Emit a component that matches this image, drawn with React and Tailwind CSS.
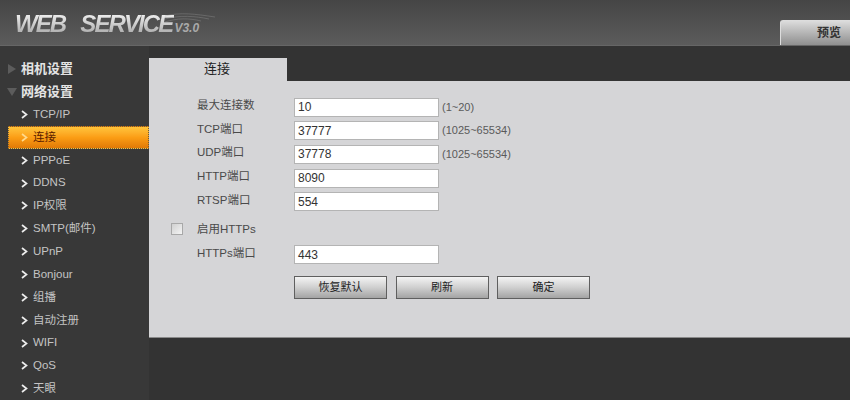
const font = { fontFamily: '"Liberation Sans", "Noto Sans CJK SC", sans-serif' }

const menuItems = ['TCP/IP', '连接', 'PPPoE', 'DDNS', 'IP权限', 'SMTP(邮件)', 'UPnP', 'Bonjour', '组播', '自动注册', 'WIFI', 'QoS', '天眼']

const portRows = [
    { label: '最大连接数', value: '10', hint: '(1~20)' },
    { label: 'TCP端口', value: '37777', hint: '(1025~65534)' },
    { label: 'UDP端口', value: '37778', hint: '(1025~65534)' },
    { label: 'HTTP端口', value: '8090' },
    { label: 'RTSP端口', value: '554' },
]

function Chevron() {
    return (
        <svg width="7" height="9" viewBox="0 0 7 9" className="shrink-0">
            <path d="M1 1 L5.5 4.5 L1 8" fill="none" stroke="currentColor" strokeWidth="1.7" />
        </svg>
    )
}

function Logo() {
    return (
        <div className="relative flex items-baseline italic font-bold text-[24px] leading-none tracking-[-1.9px]">
            <span className="bg-gradient-to-b from-[#f6f6f6] to-[#a6a6a6] bg-clip-text text-transparent pr-[2px]">WEB</span>
            <span className="ml-[13px] bg-gradient-to-b from-[#f6f6f6] to-[#a6a6a6] bg-clip-text text-transparent pr-[2px]">SERVICE</span>
            <span className="text-[12px] tracking-normal text-[#a9a9a9]">V3.0</span>
            {/* speed lines behind the version */}
            <svg width="50" height="14" viewBox="0 0 50 14" className="absolute left-[150px] top-0 opacity-50">
                <path d="M0 4 C15 0 30 2 50 5 M0 7 C15 3 30 4 44 7 M0 10 C12 6 24 6 36 9" fill="none" stroke="#9a9a9a" strokeWidth="0.7" />
            </svg>
        </div>
    )
}

function Sidebar() {
    return (
        <div className="w-[149px] shrink-0 bg-[#383838] pt-[11px] h-[354px] overflow-hidden">
            <div className="flex items-center h-[23px] pl-[8px] gap-[3px] text-[13px] font-bold text-[#e4e4e4]">
                <span className="w-0 h-0 border-y-[5px] border-y-transparent border-l-[8px] border-l-[#5c5c5c]" />
                <span className="ml-[2px]">相机设置</span>
            </div>
            <div className="flex items-center h-[23px] pl-[8px] gap-[3px] text-[13px] font-bold text-[#e4e4e4]">
                <span className="w-0 h-0 border-x-[5px] border-x-transparent border-t-[8px] border-t-[#5c5c5c] -ml-[1px]" />
                <span className="ml-[1px]">网络设置</span>
            </div>
            <div>
                {menuItems.map((item) =>
                    item === '连接' ? (
                        <div
                            key={item}
                            className="flex items-center h-[23px] ml-[8px] pl-[12px] gap-[5px] text-[11.5px] text-[#5a1c00] border border-dotted border-[#6b5a3a] bg-gradient-to-b from-[#ffc43a] via-[#fb9d14] to-[#e27a06]"
                        >
                            <span className="text-[#ffd98a]"><Chevron /></span>
                            {item}
                        </div>
                    ) : (
                        <div key={item} className="flex items-center h-[22.85px] pl-[21px] gap-[5px] text-[11.5px] text-[#c4c4c4]">
                            <span className="text-[#ececec]"><Chevron /></span>
                            {item}
                        </div>
                    ),
                )}
            </div>
        </div>
    )
}

function Field({ label, value, hint, className }) {
    return (
        <div className={`flex items-center h-[20px] ${className}`}>
            <span className="w-[97px] -mt-[3px] text-[11.5px] text-[#4a4a4a]">{label}</span>
            <div className="w-[145px] h-[19px] bg-white border border-[#b4b4b4] flex items-center pl-[3px] text-[12px] text-[#333]">{value}</div>
            {hint && <span className="ml-[3px] text-[11px] text-[#5a5a5a]">{hint}</span>}
        </div>
    )
}

function ActionButton({ children }) {
    return (
        <button className="w-[93px] h-[23px] border border-[#5f5f5f] bg-gradient-to-b from-[#f4f4f4] via-[#cfcfcf] to-[#a4a4a4] text-[11px] text-[#222]">
            {children}
        </button>
    )
}

function ConnectionForm() {
    return (
        <div className="flex-1 flex flex-col min-h-0">
            <div className="h-[35px] bg-[#333] flex items-end pt-[12px]">
                <div className="w-[138px] h-[23px] bg-[#d5d5d7] pl-[55px] text-[13px] leading-[22px] text-[#222]">连接</div>
            </div>
            <div className="h-[257px] bg-[#d5d5d7] pt-[16px] pl-[48px] flex flex-col gap-[3.7px] border-b border-b-[#8a8a8a]">
                {portRows.map((row) => <Field key={row.label} {...row} />)}
                <div className="flex items-center h-[20px] -ml-[26px] mt-[4px] gap-[14px]">
                    <span className="w-[12px] h-[12px] border border-[#a8a8a8] bg-gradient-to-br from-[#d0d0d0] to-[#f4f4f4]" />
                    <span className="text-[11.5px] text-[#4a4a4a]">启用HTTPs</span>
                </div>
                <Field label="HTTPs端口" value="443" className="mt-[1.6px]" />
                <div className="flex gap-[8.5px] ml-[97px] mt-[7.6px]">
                    <ActionButton>恢复默认</ActionButton>
                    <ActionButton>刷新</ActionButton>
                    <ActionButton>确定</ActionButton>
                </div>
            </div>
            <div className="flex-1 bg-[#333]" />
        </div>
    )
}

export default function App() {
    return (
        <div className="w-[850px] h-[400px] overflow-hidden flex flex-col bg-[#333]" style={font}>
            {/* Header */}
            <div className="h-[46px] shrink-0 flex items-end justify-between bg-gradient-to-b from-[#454545] to-[#5c5c5c] border-b border-b-[#666]">
                <div className="self-start pt-[12px] pl-[15px]"><Logo /></div>
                <div className="w-[70px] h-[25px] rounded-tl-[3px] border-l border-t border-l-[#ddd] border-t-[#ddd] bg-gradient-to-b from-[#dcdcdc] to-[#8f8f8f] pl-[36px] text-[12px] leading-[24px] font-bold text-[#333]">
                    预览
                </div>
            </div>
            <div className="flex flex-1 min-h-0">
                <Sidebar />
                <ConnectionForm />
            </div>
        </div>
    )
}
